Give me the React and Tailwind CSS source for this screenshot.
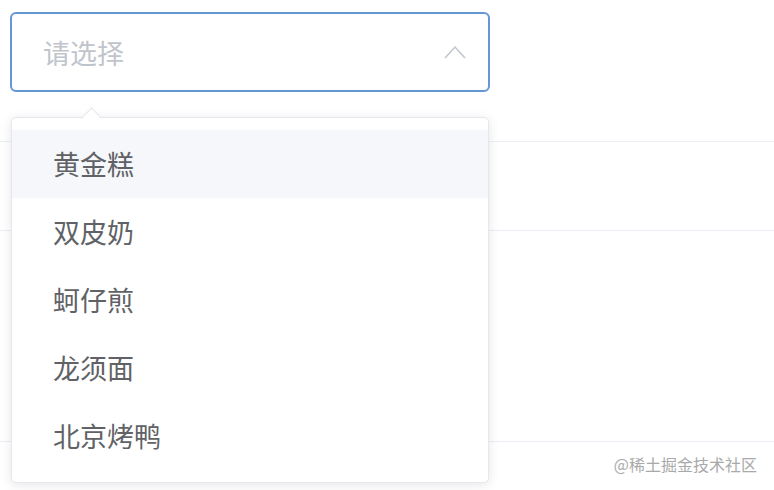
import React from "react";

const options = ["黄金糕", "双皮奶", "蚵仔煎", "龙须面", "北京烤鸭"];

const App = () => {
  return (
    <div
      className="relative w-[774px] h-[490px] bg-white overflow-hidden"
      style={{ fontFamily: '"Noto Sans CJK SC", "Noto Sans", sans-serif' }}
    >
      <div className="pt-[12px] pl-[10px]">
        <div className="w-[480px] h-[80px] border-2 border-[#6497d6] rounded-[6px] flex items-center justify-between pl-[31px] pr-[22px]">
          <span className="text-[27px] text-[#c0c4cc] leading-none">请选择</span>
          <svg width="22" height="14" viewBox="0 0 22 14" fill="none">
            <path d="M1 13 L11 2 L21 13" stroke="#c0c4cc" strokeWidth="1.5" />
          </svg>
        </div>
      </div>

      <div className="h-[50px] border-b border-[#ebeef5]" />
      <div className="h-[89px] border-b border-[#ebeef5]" />
      <div className="h-[211px] border-b border-[#ebeef5]" />
      <div className="flex justify-end pr-[17px] pt-[14px]">
        <span className="text-[16px] text-[#a9a9a9] leading-none">@稀土掘金技术社区</span>
      </div>

      <div className="absolute left-[11px] top-[117px] w-[478px] h-[366px] bg-white border border-[#e4e7ed] rounded-[5px] shadow-[0_2px_12px_rgba(0,0,0,0.1)] py-[12px]">
        <div className="absolute left-[73px] top-[-8px] w-[13px] h-[13px] bg-white border-l border-t border-[#e4e7ed] rotate-45" />
        {options.map((o, i) => (
          <div
            key={o}
            className={`h-[68px] flex items-center pl-[41px] text-[27px] text-[#606266] ${i === 0 ? "bg-[#f5f7fa]" : ""}`}
          >
            {o}
          </div>
        ))}
      </div>
    </div>
  );
};

export default App;
